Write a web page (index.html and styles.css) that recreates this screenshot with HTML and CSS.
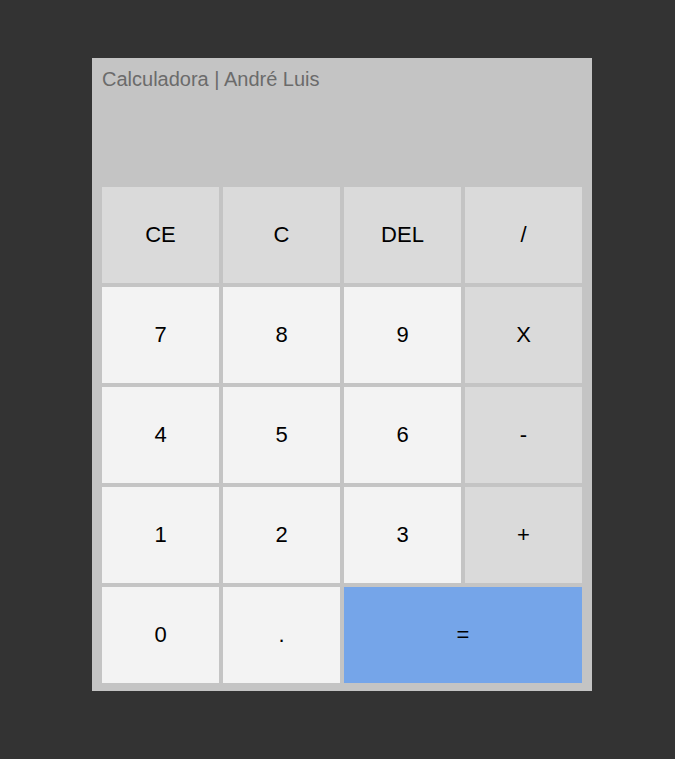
FILE: index.html
```html
<!DOCTYPE html>
<html lang="pt-BR">
<head>
<meta charset="utf-8">
<title>Calculadora | André Luis</title>
<link rel="stylesheet" href="styles.css">
</head>
<body>
<div class="calc">
  <div class="display">
    <div class="title">Calculadora | André Luis</div>
  </div>
  <div class="keys">
    <button class="key op">CE</button>
    <button class="key op">C</button>
    <button class="key op">DEL</button>
    <button class="key op">/</button>
    <button class="key">7</button>
    <button class="key">8</button>
    <button class="key">9</button>
    <button class="key op">X</button>
    <button class="key">4</button>
    <button class="key">5</button>
    <button class="key">6</button>
    <button class="key op">-</button>
    <button class="key">1</button>
    <button class="key">2</button>
    <button class="key">3</button>
    <button class="key op">+</button>
    <button class="key">0</button>
    <button class="key">.</button>
    <button class="key eq">=</button>
  </div>
</div>
</body>
</html>
```
FILE: styles.css
```css
html, body {
  margin: 0;
  padding: 0;
  background: #333333;
  height: 100%;
}
body {
  padding-top: 58px;
  box-sizing: border-box;
  font-family: "Liberation Sans", Arial, sans-serif;
}
.calc {
  width: 500px;
  margin-left: 92px;
  background: #c4c4c4;
  padding: 10px 10px 8px 10px;
  box-sizing: border-box;
}
.display {
  height: 119px;
}
.title {
  font-size: 20px;
  color: #6b6b6b;
  line-height: 22px;
}
.keys {
  display: grid;
  grid-template-columns: repeat(4, 117px);
  grid-auto-rows: 96px;
  gap: 4px;
}
.key {
  border: none;
  margin: 0;
  padding: 0;
  background: #f3f3f3;
  font-family: "Liberation Sans", Arial, sans-serif;
  font-size: 22px;
  color: #000;
  cursor: pointer;
}
.key.op {
  background: #dadada;
}
.key.eq {
  grid-column: span 2;
  background: #75a5e9;
}
```
